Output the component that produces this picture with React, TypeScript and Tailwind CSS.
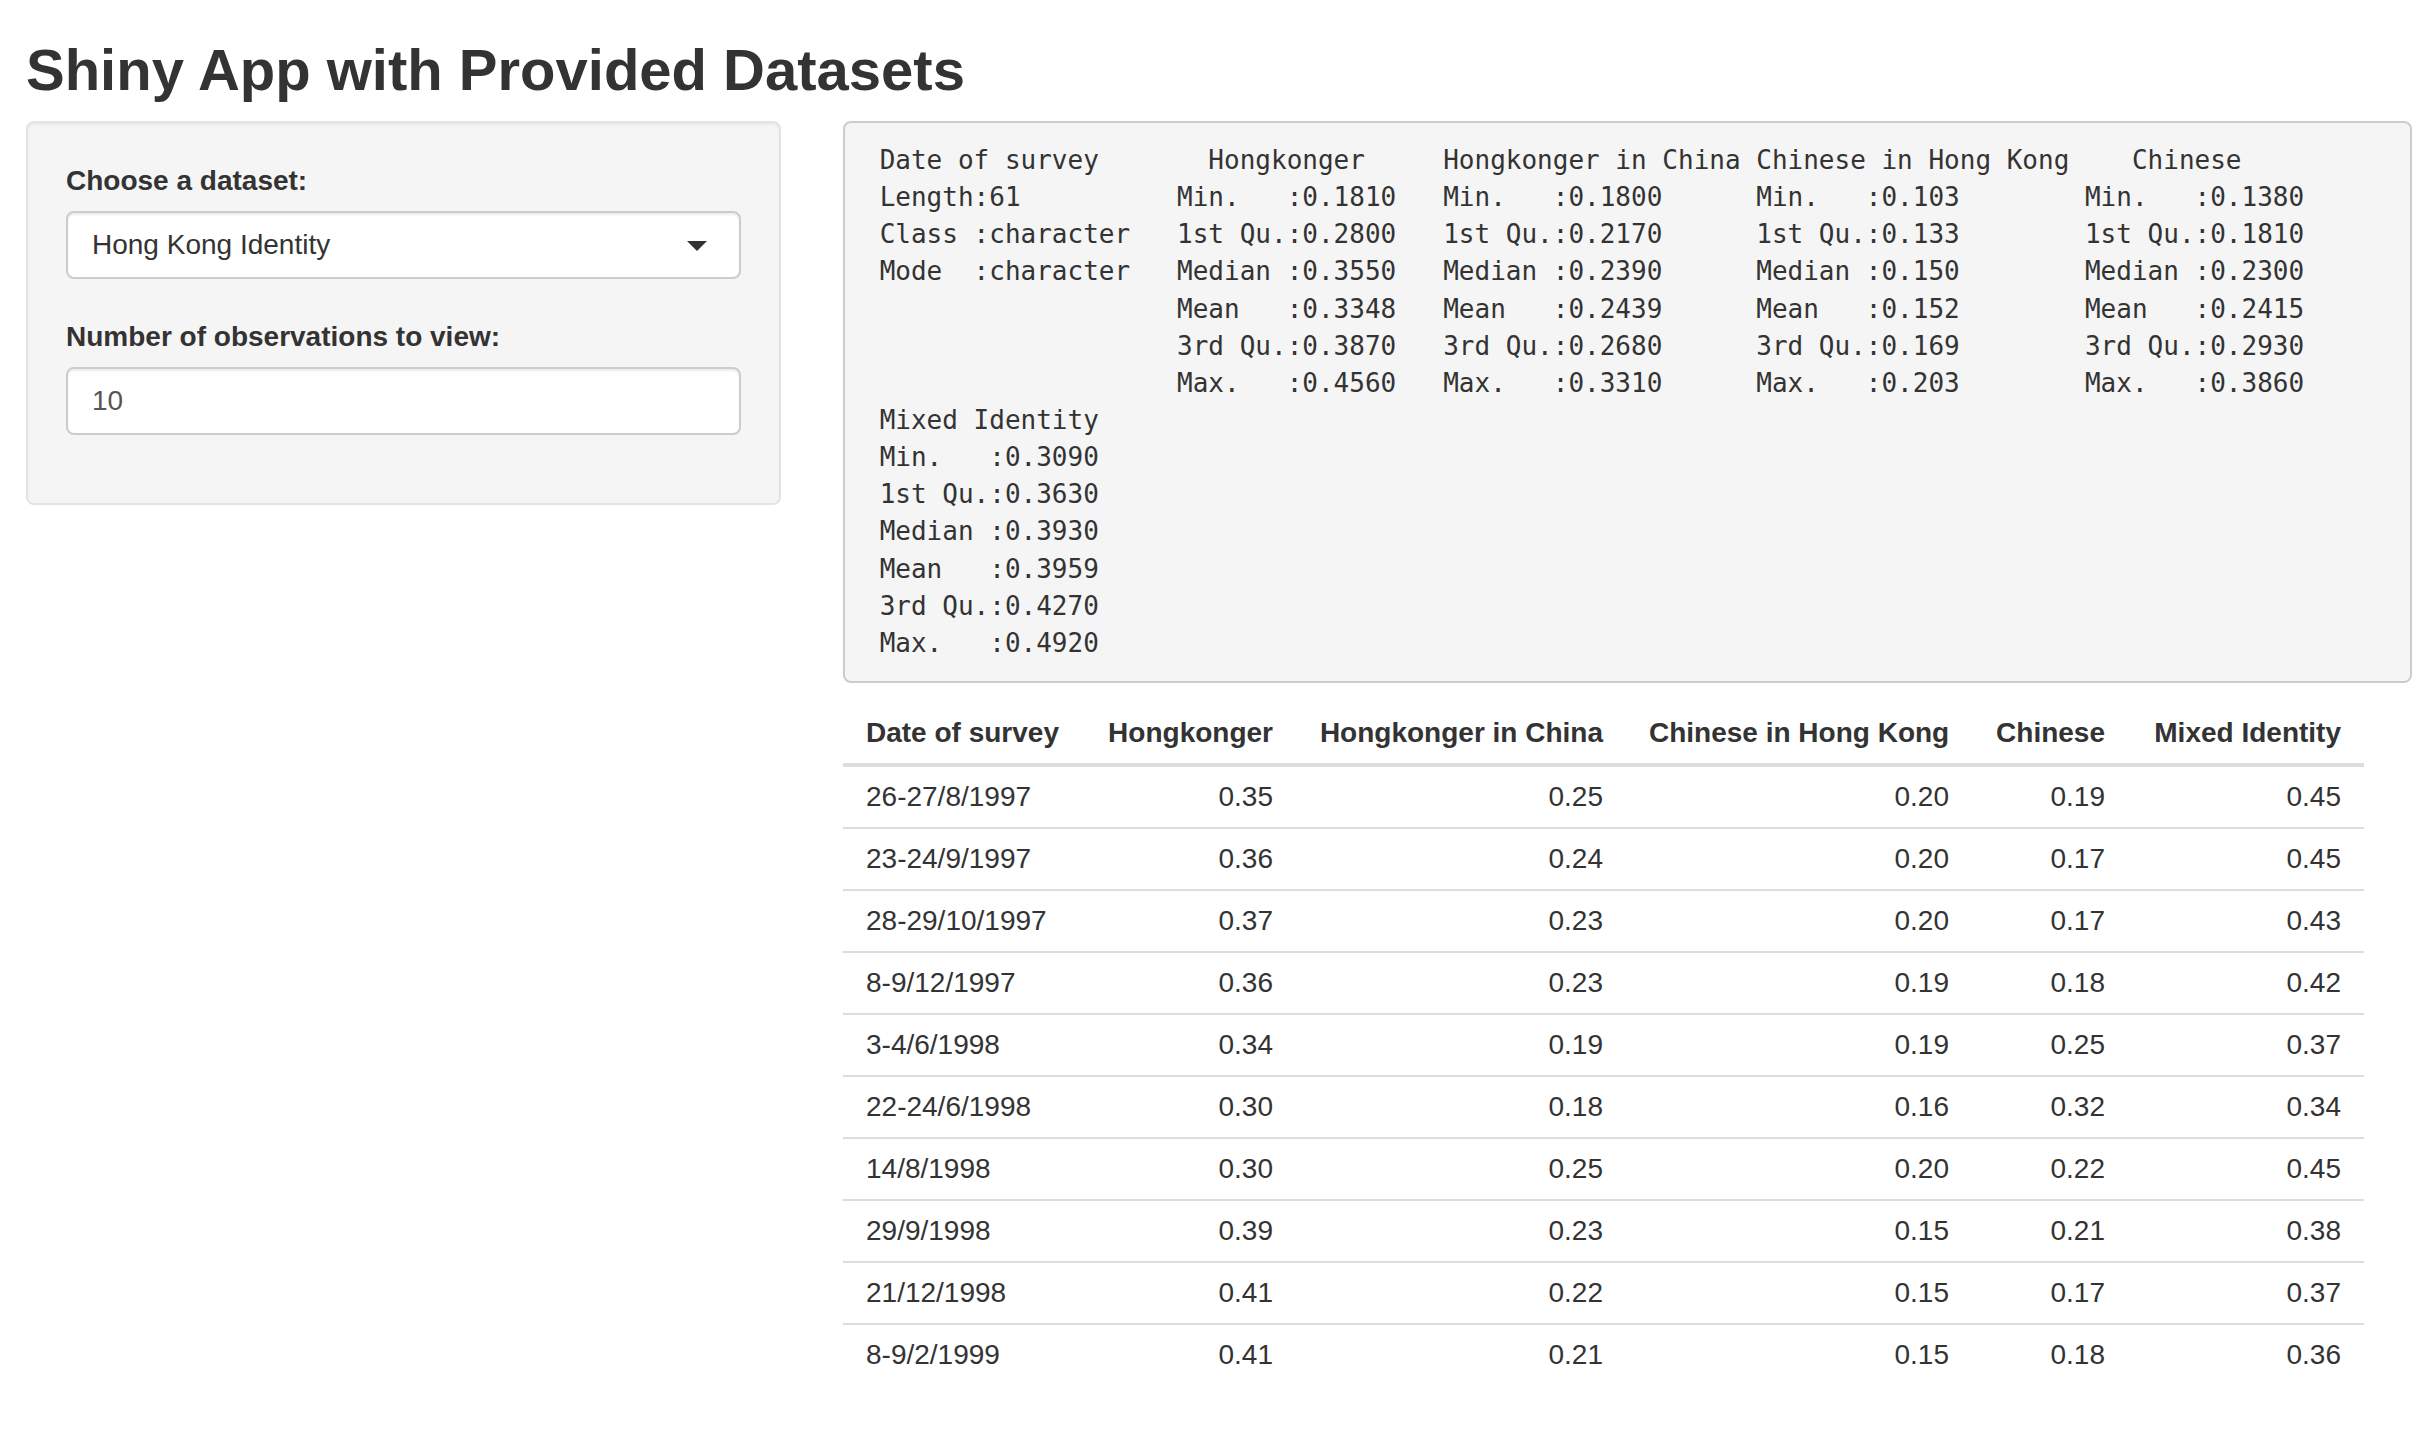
import React from "react";

const stats = ["Min.   :", "1st Qu.:", "Median :", "Mean   :", "3rd Qu.:", "Max.   :"];

// pads each cell to its column position, the way R prints summary()
function line(parts: [number, string][]) {
  let s = "";
  for (const [pos, text] of parts) {
    s = s.padEnd(pos) + text;
  }
  return " " + s;
}

const firstCol = ["Length:61", "Class :character", "Mode  :character", "", "", ""];
const hk = ["0.1810", "0.2800", "0.3550", "0.3348", "0.3870", "0.4560"];
const hkChina = ["0.1800", "0.2170", "0.2390", "0.2439", "0.2680", "0.3310"];
const chHk = ["0.103", "0.133", "0.150", "0.152", "0.169", "0.203"];
const ch = ["0.1380", "0.1810", "0.2300", "0.2415", "0.2930", "0.3860"];
const mixed = ["0.3090", "0.3630", "0.3930", "0.3959", "0.4270", "0.4920"];

const summaryLines = [
  line([
    [0, "Date of survey"],
    [21, "Hongkonger"],
    [36, "Hongkonger in China"],
    [56, "Chinese in Hong Kong"],
    [80, "Chinese"],
  ]),
  ...stats.map((s, i) =>
    line([
      [0, firstCol[i]],
      [19, s + hk[i]],
      [36, s + hkChina[i]],
      [56, s + chHk[i]],
      [77, s + ch[i]],
    ])
  ),
  line([[0, "Mixed Identity"]]),
  ...stats.map((s, i) => line([[0, s + mixed[i]]])),
];

const headers = ["Date of survey", "Hongkonger", "Hongkonger in China", "Chinese in Hong Kong", "Chinese", "Mixed Identity"];

const rows = [
  ["26-27/8/1997", "0.35", "0.25", "0.20", "0.19", "0.45"],
  ["23-24/9/1997", "0.36", "0.24", "0.20", "0.17", "0.45"],
  ["28-29/10/1997", "0.37", "0.23", "0.20", "0.17", "0.43"],
  ["8-9/12/1997", "0.36", "0.23", "0.19", "0.18", "0.42"],
  ["3-4/6/1998", "0.34", "0.19", "0.19", "0.25", "0.37"],
  ["22-24/6/1998", "0.30", "0.18", "0.16", "0.32", "0.34"],
  ["14/8/1998", "0.30", "0.25", "0.20", "0.22", "0.45"],
  ["29/9/1998", "0.39", "0.23", "0.15", "0.21", "0.38"],
  ["21/12/1998", "0.41", "0.22", "0.15", "0.17", "0.37"],
  ["8-9/2/1999", "0.41", "0.21", "0.15", "0.18", "0.36"],
];

function Sidebar() {
  return (
    <div className="w-[755px] shrink-0 rounded-[8px] border-2 border-[#e3e3e3] bg-[#f5f5f5] p-[38px] shadow-[inset_0_2px_2px_rgba(0,0,0,0.05)]">
      <label className="block text-[28px] font-bold leading-[40px] mb-[10px]">Choose a dataset:</label>
      <div className="relative h-[68px] rounded-[8px] border-2 border-[#ccc] bg-white px-[24px] flex items-center shadow-[inset_0_2px_2px_rgba(0,0,0,0.075)]">
        <span className="text-[28px] leading-[40px]">Hong Kong Identity</span>
        <span className="absolute right-[32px] top-[28px] w-0 h-0 border-x-[10px] border-x-transparent border-t-[10px] border-t-[#333]" />
      </div>
      <label className="block text-[28px] font-bold leading-[40px] mt-[38px] mb-[10px]">Number of observations to view:</label>
      <div className="h-[68px] rounded-[8px] border-2 border-[#ccc] bg-white px-[24px] flex items-center shadow-[inset_0_2px_2px_rgba(0,0,0,0.075)]">
        <span className="text-[28px] leading-[40px] text-[#555]">10</span>
      </div>
      <div className="h-[30px]" />
    </div>
  );
}

function Summary() {
  return (
    <pre className="rounded-[8px] border-2 border-[#ccc] bg-[#f5f5f5] p-[19px] text-[26px] leading-[37.14px] text-[#333] whitespace-pre font-['DejaVu_Sans_Mono',monospace]">
      {summaryLines.join("\n")}
    </pre>
  );
}

function DataTable() {
  const widths = ["w-[240px]", "w-[213px]", "w-[330px]", "w-[346px]", "w-[156px]", "w-[236px]"];
  return (
    <table className="mt-[20px] w-[1521px] table-fixed border-collapse text-[28px] leading-[40px]">
      <colgroup>
        {widths.map((w, i) => (
          <col key={i} className={w} />
        ))}
      </colgroup>
      <thead>
        <tr className="border-b-4 border-[#ddd]">
          {headers.map((h, i) => (
            <th key={h} className={`py-[10px] px-[23px] font-bold whitespace-nowrap ${i === 0 ? "text-left" : "text-right"}`}>
              {h}
            </th>
          ))}
        </tr>
      </thead>
      <tbody>
        {rows.map((r, ri) => (
          <tr key={ri} className={ri === 0 ? "" : "border-t-2 border-[#ddd]"}>
            {r.map((c, i) => (
              <td key={i} className={`py-[10px] px-[23px] ${i === 0 ? "text-left" : "text-right"}`}>
                {c}
              </td>
            ))}
          </tr>
        ))}
      </tbody>
    </table>
  );
}

export default function App() {
  return (
    <div className="min-h-screen bg-white pl-[26px] text-[#333] font-['Liberation_Sans',Arial,sans-serif]">
      <h2 className="pt-[38px] h-[121px] text-[58px] font-bold leading-[64px]">Shiny App with Provided Datasets</h2>
      <div className="flex items-start gap-[62px]">
        <Sidebar />
        <div className="w-[1569px] shrink-0">
          <Summary />
          <DataTable />
        </div>
      </div>
    </div>
  );
}
